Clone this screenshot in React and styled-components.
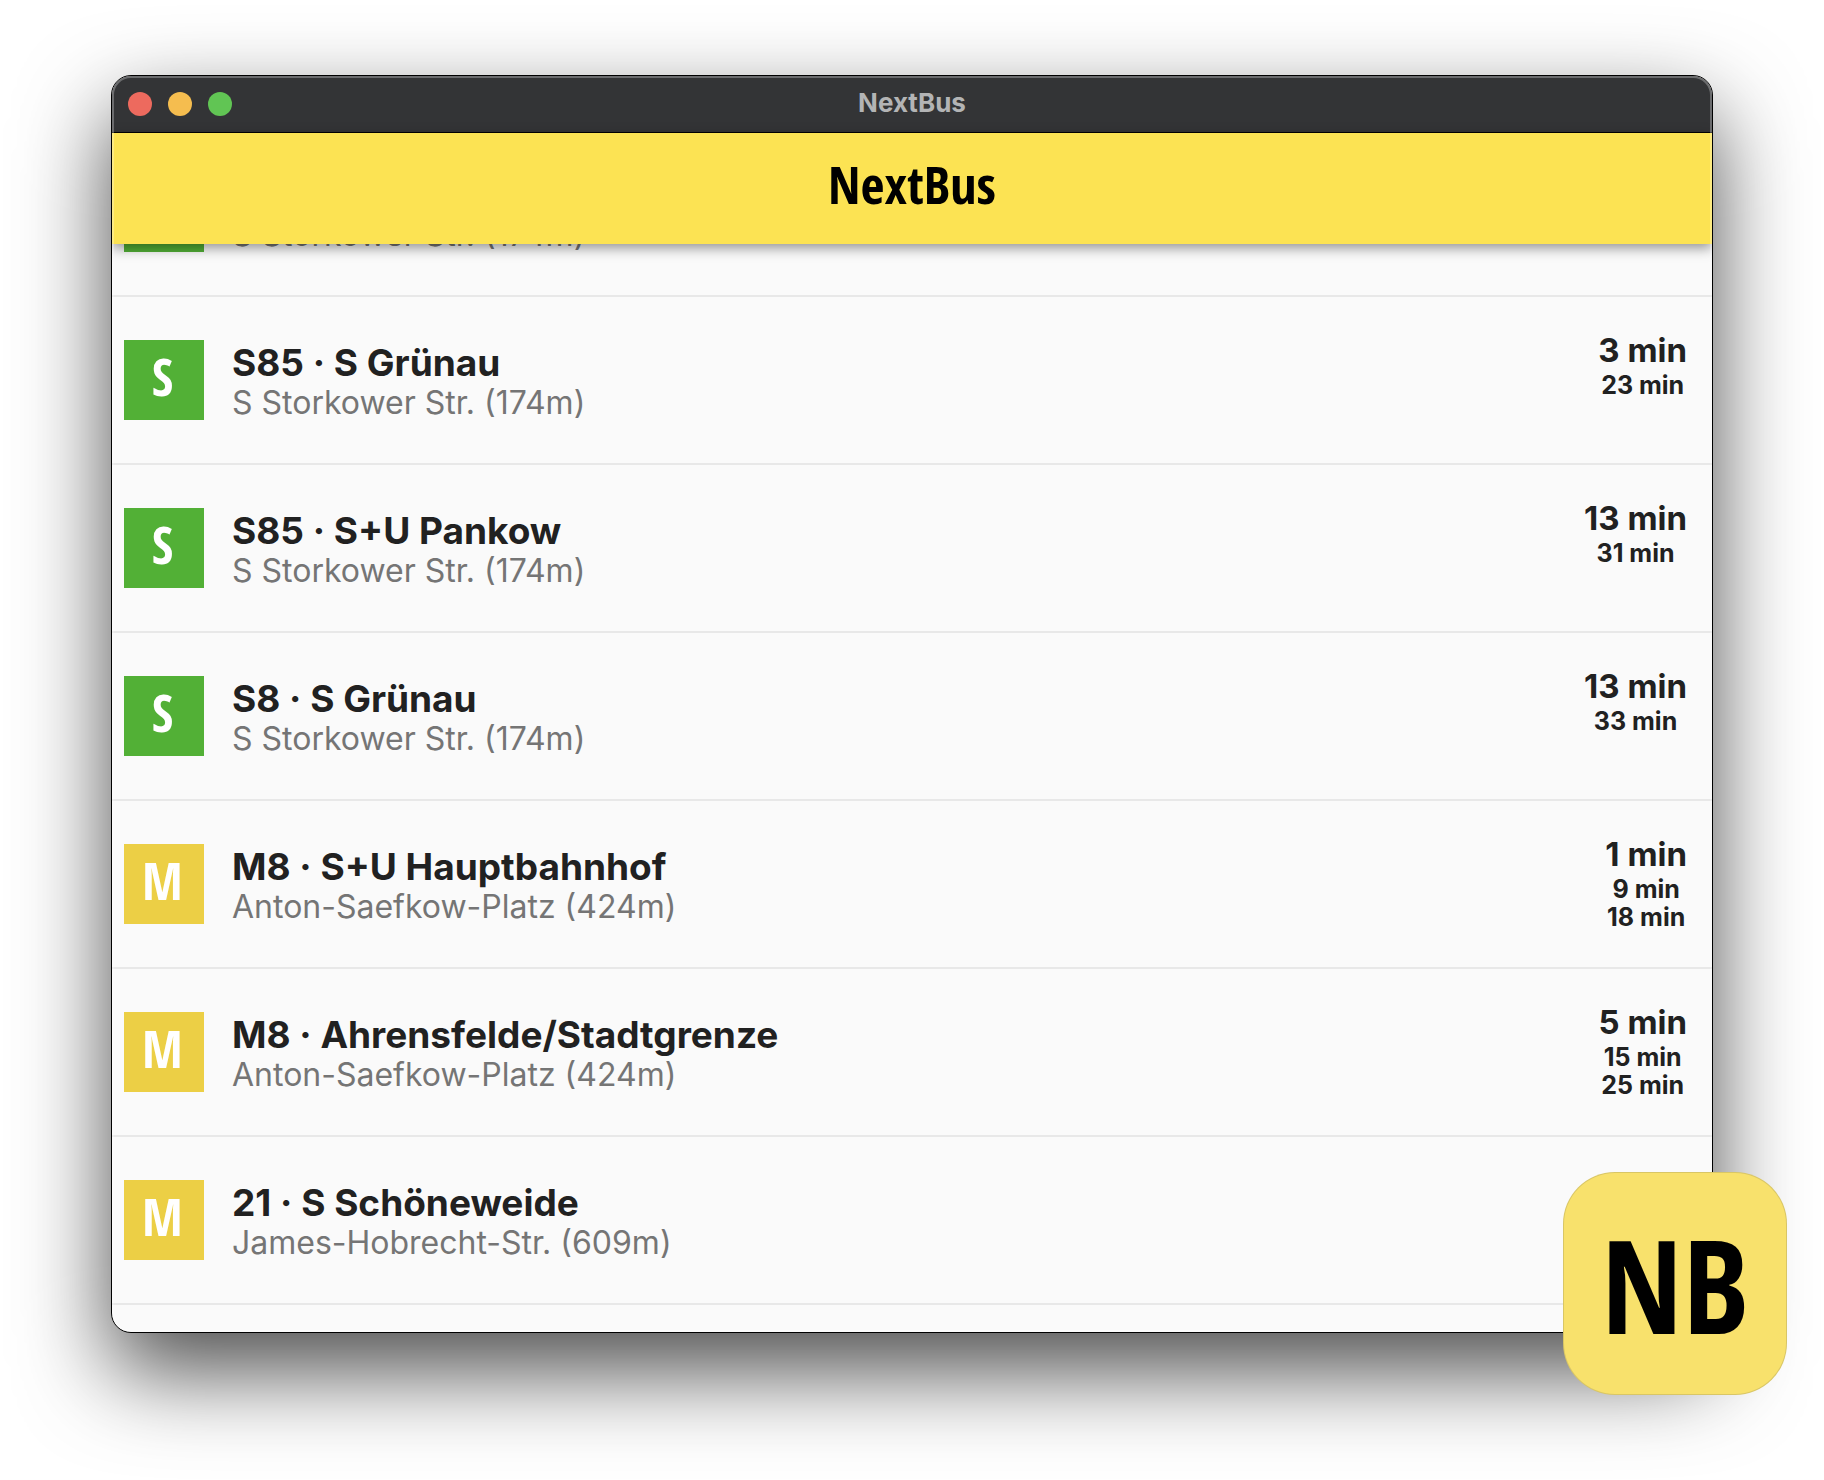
import React, { useLayoutEffect, useRef } from "react";
import styled, { createGlobalStyle } from "styled-components";

const sans = `Inter, "Liberation Sans", sans-serif`;
const signage = `"Open Sans Condensed", "Roboto Condensed", "Open Sans", sans-serif`;

const GlobalStyle = createGlobalStyle`
  *, *::before, *::after { box-sizing: border-box; }
  body { margin: 0; background: #fff; font-family: ${sans}; }
`;

const Page = styled.div`
  position: relative;
  display: flex;
  height: 100vh;
  padding: 75px 111px 147px;
  overflow: hidden;
`;

const Window = styled.main`
  position: relative;
  display: flex;
  flex: 1;
  flex-direction: column;
  min-width: 0;
  overflow: hidden;
  border: 1px solid #000;
  border-radius: 20px;
  background: #fafafa;
  box-shadow: 0 38px 90px rgba(0, 0, 0, 0.7);

  &::after {
    content: "";
    position: absolute;
    inset: 0;
    z-index: 3;
    border-radius: 19px;
    box-shadow: inset 0 0 0 2px rgba(255, 255, 255, 0.28);
    pointer-events: none;
  }
`;

const TitleBar = styled.div`
  display: grid;
  grid-template-columns: 1fr auto 1fr;
  align-items: center;
  height: 57px;
  padding: 0 16px;
  border-bottom: 1px solid #000;
  background: #333436;
`;

const Lights = styled.div`
  display: flex;
  gap: 16px;
`;

const Light = styled.button`
  width: 24px;
  height: 24px;
  padding: 0;
  border: 0;
  border-radius: 50%;
  background: ${(p) => p.$color};
`;

const WindowTitle = styled.div`
  padding-bottom: 2px;
  color: #b3b4b5;
  font-size: 26px;
  font-weight: 700;
  line-height: 32px;
`;

const Header = styled.header`
  position: relative;
  z-index: 2;
  display: flex;
  justify-content: center;
  align-items: center;
  height: 111px;
  background: #fce353;
  box-shadow: 0 4px 12px rgba(0, 0, 0, 0.42);
`;

const Heading = styled.h1`
  margin: 0;
  padding-bottom: 10px;
  color: #000;
  font-family: ${signage};
  font-size: 52px;
  font-weight: 700;
  line-height: 60px;
`;

const List = styled.ul`
  flex: 1;
  min-height: 0;
  margin: 0;
  padding: 0 0 56px;
  overflow-y: auto;
  scrollbar-width: none;
  list-style: none;
`;

const Row = styled.li`
  display: flex;
  align-items: center;
  gap: 28px;
  height: 168px;
  padding: 0 25px 0 12px;
  border-bottom: 2px solid #e8e8e8;
`;

const Line = styled.div`
  display: flex;
  justify-content: center;
  flex: none;
  width: 80px;
  height: 80px;
  padding: 6px 3px 0 0;
  background: ${(p) => (p.$kind === "S" ? "#52b036" : "#eccf45")};
  color: #fff;
  font-family: ${signage};
  font-size: 52px;
  font-weight: 700;
  line-height: 60px;
`;

const Info = styled.div`
  flex: 1;
  min-width: 0;
  padding-top: 2px;
`;

const Direction = styled.div`
  min-height: 44px;
  color: #212121;
  font-size: 37px;
  font-weight: 700;
  line-height: 44px;
`;

const Stop = styled.div`
  color: #757575;
  font-size: 32px;
  line-height: 36px;
`;

const Times = styled.div`
  align-self: flex-start;
  padding-top: 32px;
  color: #212121;
  font-size: 25px;
  font-weight: 700;
  line-height: 28px;
  text-align: center;
`;

const Next = styled.div`
  font-size: 33px;
  line-height: 42px;
`;

const AppIcon = styled.div`
  position: absolute;
  right: 37px;
  bottom: 85px;
  z-index: 4;
  display: flex;
  justify-content: center;
  align-items: center;
  width: 224px;
  height: 223px;
  border: 1px solid rgba(160, 150, 90, 0.35);
  border-radius: 52px;
  background: #f8e16c;
  color: #000;
  font-family: ${signage};
  font-size: 130px;
  font-weight: 700;
  line-height: 150px;
`;

const departures = [
  { kind: "S", direction: "", stop: "S Storkower Str. (174m)", times: [] },
  { kind: "S", direction: "S85 · S Grünau", stop: "S Storkower Str. (174m)", times: [3, 23] },
  { kind: "S", direction: "S85 · S+U Pankow", stop: "S Storkower Str. (174m)", times: [13, 31] },
  { kind: "S", direction: "S8 · S Grünau", stop: "S Storkower Str. (174m)", times: [13, 33] },
  { kind: "M", direction: "M8 · S+U Hauptbahnhof", stop: "Anton-Saefkow-Platz (424m)", times: [1, 9, 18] },
  { kind: "M", direction: "M8 · Ahrensfelde/Stadtgrenze", stop: "Anton-Saefkow-Platz (424m)", times: [5, 15, 25] },
  { kind: "M", direction: "21 · S Schöneweide", stop: "James-Hobrecht-Str. (609m)", times: [] },
];

function Departure({ kind, direction, stop, times }) {
  const [next, ...later] = times;
  return (
    <Row>
      <Line $kind={kind}>{kind}</Line>
      <Info>
        <Direction>{direction}</Direction>
        <Stop>{stop}</Stop>
      </Info>
      {next && (
        <Times>
          <Next>{next} min</Next>
          {later.map((t) => (
            <div key={t}>{t} min</div>
          ))}
        </Times>
      )}
    </Row>
  );
}

export default function App() {
  const list = useRef(null);
  useLayoutEffect(() => {
    list.current.scrollTop = 115;
  }, []);

  return (
    <Page>
      <GlobalStyle />
      <Window>
        <TitleBar>
          <Lights>
            <Light type="button" aria-label="Close" $color="#ed6a5e" />
            <Light type="button" aria-label="Minimize" $color="#f5bd4f" />
            <Light type="button" aria-label="Zoom" $color="#61c554" />
          </Lights>
          <WindowTitle>NextBus</WindowTitle>
        </TitleBar>
        <Header>
          <Heading>NextBus</Heading>
        </Header>
        <List ref={list}>
          {departures.map((d, i) => (
            <Departure key={i} {...d} />
          ))}
        </List>
      </Window>
      <AppIcon>NB</AppIcon>
    </Page>
  );
}
